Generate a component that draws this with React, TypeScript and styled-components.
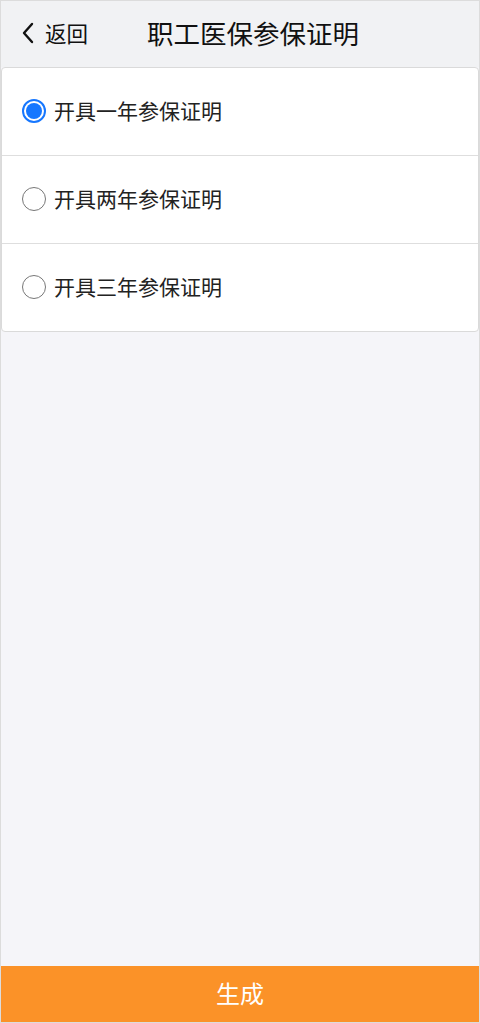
import React from 'react'
import styled, { createGlobalStyle } from 'styled-components'

const GlobalStyle = createGlobalStyle`
  html, body {
    margin: 0;
    padding: 0;
  }
  body {
    font-family: 'Noto Sans CJK SC', 'Noto Sans', sans-serif;
    background: #f5f5f9;
  }
  * {
    box-sizing: border-box;
  }
`

const options = ['开具一年参保证明', '开具两年参保证明', '开具三年参保证明']

const App = () => {
  const [selected, setSelected] = React.useState(0)

  return (
    <>
      <GlobalStyle />
      <Page>
        <Header>
          <BackButton>
            <svg width="14" height="22" viewBox="0 0 14 22">
              <path
                d="M11 2 L3 11 L11 20"
                fill="none"
                stroke="#111"
                strokeWidth="2.4"
                strokeLinecap="round"
                strokeLinejoin="round"
              />
            </svg>
            <BackText>返回</BackText>
          </BackButton>
          <Title>职工医保参保证明</Title>
        </Header>

        <Card>
          {options.map((label, i) => (
            <Row key={label} $last={i === options.length - 1} onClick={() => setSelected(i)}>
              <Radio $checked={selected === i} />
              <RowLabel>{label}</RowLabel>
            </Row>
          ))}
        </Card>

        <Spacer />

        <SubmitButton>生成</SubmitButton>
      </Page>
    </>
  )
}

const Page = styled.div`
  min-height: 100vh;
  display: flex;
  flex-direction: column;
  border: 1px solid #dcdcdc;
  background: #f5f5f9;
`

const Header = styled.div`
  height: 66px;
  display: flex;
  align-items: center;
  padding-left: 20px;
  padding-bottom: 2px;
  background: #f1f2f4;
`

const BackButton = styled.div`
  display: flex;
  align-items: center;
  gap: 10px;
  color: #111;
  cursor: pointer;
`

const BackText = styled.span`
  font-size: 21.5px;
  line-height: 1;
`

const Title = styled.h1`
  margin: 0 0 0 59px;
  font-size: 26.5px;
  font-weight: 400;
  color: #111;
  line-height: 1;
`

const Card = styled.div`
  background: #fff;
  border: 1px solid #dadada;
  border-radius: 4px;
`

const Row = styled.div<{ $last: boolean }>`
  height: ${(p) => (p.$last ? 87 : 88)}px;
  display: flex;
  align-items: center;
  padding-left: 20px;
  padding-bottom: 2px;
  border-bottom: ${(p) => (p.$last ? 'none' : '1px solid #dedede')};
  cursor: pointer;
`

const Radio = styled.span<{ $checked: boolean }>`
  width: 24px;
  height: 24px;
  border-radius: 50%;
  border: 2px solid ${(p) => (p.$checked ? '#1677ff' : '#777')};
  border-width: ${(p) => (p.$checked ? 2 : 1.5)}px;
  display: flex;
  align-items: center;
  justify-content: center;
  flex-shrink: 0;

  &::after {
    content: '';
    width: 16px;
    height: 16px;
    border-radius: 50%;
    background: #1677ff;
    display: ${(p) => (p.$checked ? 'block' : 'none')};
  }
`

const RowLabel = styled.span`
  margin-left: 8px;
  font-size: 21px;
  color: #222;
  line-height: 1;
`

const Spacer = styled.div`
  flex: 1;
`

const SubmitButton = styled.button`
  height: 56px;
  border: none;
  padding: 0 0 4px;
  background: #fb9228;
  color: #fff;
  font-family: inherit;
  font-size: 24px;
  cursor: pointer;
`

export default App
